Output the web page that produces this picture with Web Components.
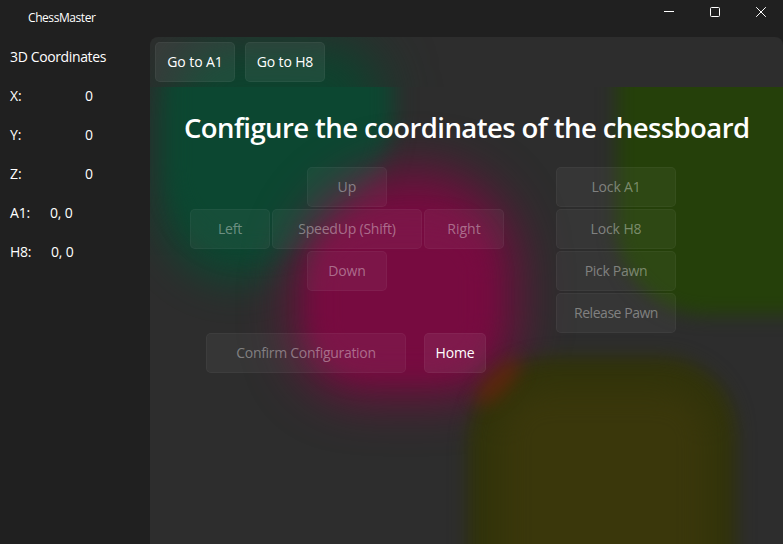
<!DOCTYPE html>
<html lang="en">
<head>
<meta charset="utf-8">
<title>ChessMaster</title>
<style>
html,body{margin:0;height:100%;background:#202020;overflow:hidden}
</style>
</head>
<body>
<chess-app></chess-app>
<script>
const define=(name,html,after)=>customElements.define(name,class extends HTMLElement{
  constructor(){
    super();
    const t=document.createElement('template');
    t.innerHTML=html;
    this.attachShadow({mode:'open'}).append(t.content.cloneNode(true));
  }
  connectedCallback(){ if(after) after(this); }
});

// Single line of text tracked to an exact advance width.
define('fit-text',`<style>
:host{display:block;white-space:nowrap;width:max-content}
span{display:inline-block}
</style><span><slot></slot></span>`,el=>{
  const s=el.shadowRoot.querySelector('span'),w=+el.getAttribute('w');
  const n=el.textContent.length;
  s.style.letterSpacing=((w-s.getBoundingClientRect().width)/n)+'px';
});

define('chess-button',`<style>
:host{display:flex;box-sizing:border-box;height:40px;width:80px;padding-bottom:2px;align-items:center;justify-content:center;
 border:1px solid rgba(255,255,255,.045);border-radius:5px;background:rgba(255,255,255,.063);color:#fff}
:host([disabled]){background:rgba(255,255,255,.042);color:rgba(255,255,255,.38);border-color:rgba(255,255,255,.04)}
</style><slot></slot>`);

define('title-bar',`<style>
:host{display:flex;height:37px;justify-content:space-between;font-size:12px}
.name{padding:9px 0 0 28px;line-height:18px}
.controls{display:grid;grid-template-columns:repeat(3,46px);height:24px;margin-right:-1px;justify-items:center;align-items:center}
svg{display:block;width:12px;height:12px;fill:none;stroke:#fff}
</style>
<div class="name"><fit-text w="67.5">ChessMaster</fit-text></div>
<div class="controls">
<svg viewBox="0 0 12 12"><path d="M1 5.5H11"/></svg>
<svg viewBox="0 0 12 12"><rect x="1.5" y="1.5" width="9" height="9" rx="1"/></svg>
<svg viewBox="0 0 12 12"><path d="M1.2 1.2L10.8 10.8M10.8 1.2L1.2 10.8"/></svg>
</div>`);

define('coord-row',`<style>
:host{display:grid;grid-template-columns:var(--label,75px) auto;line-height:20px;height:20px}
</style><slot></slot>`);

define('side-bar',`<style>
:host{display:flex;flex-direction:column;gap:19px;padding:10px 0 0 10px;width:140px}
.head{line-height:20px;height:20px}
</style>
<div class="head"><fit-text w="96">3D Coordinates</fit-text></div>
<coord-row><fit-text w="11.5">X:</fit-text><fit-text w="8">0</fit-text></coord-row>
<coord-row><fit-text w="11.5">Y:</fit-text><fit-text w="8">0</fit-text></coord-row>
<coord-row><fit-text w="11.5">Z:</fit-text><fit-text w="8">0</fit-text></coord-row>
<coord-row style="--label:40px"><fit-text w="20">A1:</fit-text><fit-text w="22.5">0, 0</fit-text></coord-row>
<coord-row style="--label:41px"><fit-text w="21">H8:</fit-text><fit-text w="22.5">0, 0</fit-text></coord-row>`);

define('glow-field',`<style>
:host{position:absolute;inset:0;overflow:hidden;z-index:0}
i{position:absolute;display:block}
.green{left:19px;top:-80px;width:224px;height:246px;border-radius:60px 60px 150px 90px;background:#0c4731;filter:blur(11px)}
.green2{left:8px;top:-60px;width:158px;height:256px;border-radius:80px;background:#0c4731;filter:blur(19px);opacity:.9}
.pink{left:145px;top:82px;width:222px;height:228px;border-radius:120px 100px 70px 70px;background:#770b40;filter:blur(25px)}
.pink2{left:165px;top:137px;width:171px;height:149px;border-radius:60px 50px 50px 50px;background:#770b40;filter:blur(12px)}
.lime{left:466px;top:-60px;width:260px;height:288px;border-radius:50px 50px 50px 90px;background:#25400a;filter:blur(9px)}
.rust{left:318px;top:284px;width:60px;height:22px;border-radius:50%;background:#6a2408;filter:blur(9px);opacity:.75;transform:rotate(-47deg)}
.olive{left:318px;top:270px;width:268px;height:280px;border-radius:88px 76px 0 0;background:#31330a;filter:blur(9px)}
.olive2{left:350px;top:304px;width:208px;height:240px;border-radius:45px;background:#3a370b;filter:blur(15px)}
</style><i class="green2"></i><i class="green"></i><i class="pink"></i><i class="pink2"></i><i class="lime"></i><i class="olive"></i><i class="olive2"></i><i class="rust"></i>`);

define('tool-strip',`<style>
:host{position:relative;display:flex;gap:10px;height:50px;padding:5px;box-sizing:border-box;overflow:hidden}
i{position:absolute;left:22px;top:4px;width:210px;height:130px;border-radius:50px;background:#0d432e;filter:blur(26px)}
chess-button{position:relative}
</style><i></i>
<chess-button><fit-text w="55.5">Go to A1</fit-text></chess-button>
<chess-button><fit-text w="56.5">Go to H8</fit-text></chess-button>`);

define('config-page',`<style>
:host{display:block;position:relative;height:457px}
main{position:relative;z-index:1;display:grid;grid-template-columns:314px 120px;column-gap:52px;padding:22px 0 0 40px;align-content:start}
h1{grid-column:1/3;margin:0 0 0 -6px;height:38px;line-height:38px;font-size:27.5px;font-weight:600}
.pad{display:grid;grid-template-columns:80px 150px 80px;grid-template-rows:repeat(3,40px);gap:2px;justify-items:center;margin-top:20px}
.up{grid-area:1/2}.left{grid-area:2/1}.speed{grid-area:2/2;width:150px}.right{grid-area:2/3}.down{grid-area:3/2}
.locks{display:grid;gap:2px;margin-top:20px}
.locks chess-button{width:120px}
.foot{grid-column:1/3;display:flex;gap:18px;padding-left:16px}
</style>
<glow-field></glow-field>
<main>
<h1><fit-text w="565.5">Configure the coordinates of the chessboard</fit-text></h1>
<div class="pad">
<chess-button disabled class="up"><fit-text w="19">Up</fit-text></chess-button>
<chess-button disabled class="left"><fit-text w="24">Left</fit-text></chess-button>
<chess-button disabled class="speed"><fit-text w="97.5">SpeedUp (Shift)</fit-text></chess-button>
<chess-button disabled class="right"><fit-text w="33.5">Right</fit-text></chess-button>
<chess-button disabled class="down"><fit-text w="37.5">Down</fit-text></chess-button>
</div>
<div class="locks">
<chess-button disabled><fit-text w="49">Lock A1</fit-text></chess-button>
<chess-button disabled><fit-text w="51">Lock H8</fit-text></chess-button>
<chess-button disabled><fit-text w="62.5">Pick Pawn</fit-text></chess-button>
<chess-button disabled><fit-text w="84">Release Pawn</fit-text></chess-button>
</div>
<div class="foot">
<chess-button disabled style="width:200px"><fit-text w="139.5">Confirm Configuration</fit-text></chess-button>
<chess-button style="width:62px"><fit-text w="39">Home</fit-text></chess-button>
</div>
</main>`);

define('chess-app',`<style>
:host{display:block;width:783px;height:544px;background:#202020;color:#fff;font:14px "Open Sans","Noto Sans",sans-serif;overflow:hidden}
.body{display:flex;height:507px}
.panel{width:633px;height:507px;background:#2d2d2d;border-radius:8px 8px 0 0;overflow:hidden}
</style>
<title-bar></title-bar>
<div class="body"><side-bar></side-bar><div class="panel"><tool-strip></tool-strip><config-page></config-page></div></div>`);
</script>
</body>
</html>
